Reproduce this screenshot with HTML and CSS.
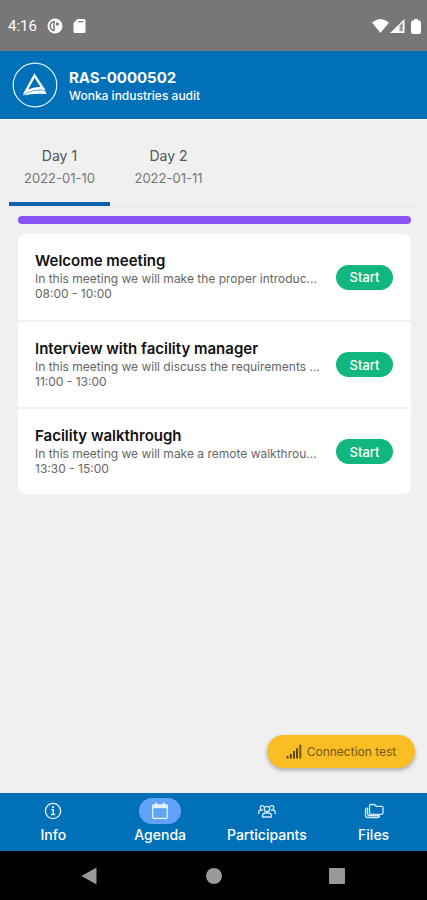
FILE: index.html
```html
<!DOCTYPE html>
<html lang="en">
<head>
<meta charset="utf-8">
<meta name="viewport" content="width=device-width, initial-scale=1">
<title>Agenda</title>
<link rel="stylesheet" href="styles.css">
</head>
<body>
<div class="status">
  <div class="status-group">
    <span class="clock">4:16</span>
    <svg width="16" height="16" viewBox="0 0 16 16"><circle cx="8" cy="8" r="7.5" fill="#fff"/><path d="M7 3.400A4.700 4.700 0 0 0 7 12.600Z" fill="none" stroke="#777" stroke-width="1.500"/><path d="M9 4.500h1.500a1.500 1.500 0 0 1 0 3H9Z" fill="#777"/></svg>
    <svg width="13" height="14" viewBox="0 0 13 14"><path d="M4.500 0H11a1.500 1.500 0 0 1 1.500 1.500V12.500A1.500 1.500 0 0 1 11 14H2A1.500 1.500 0 0 1 .5 12.500V4Z" fill="#fff"/><path d="M5 2.700h5.500" stroke="#777" stroke-width="1.200"/></svg>
  </div>
  <div class="status-group status-right">
    <svg width="17" height="14" viewBox="0 0 17 14"><path d="M0 3.500Q8.500-3.500 17 3.500L8.500 14Z" fill="#fff"/></svg>
    <svg width="15" height="14" viewBox="0 0 15 14"><path d="M0 14 14.500 0V14Z" fill="#fff"/><path d="M9.500 6.500 12.800 3.500V12.300H9.500Z" fill="#999"/></svg>
    <svg class="battery" width="10" height="15" viewBox="0 0 10 15"><path d="M3 0h4v1.500h1A2 2 0 0 1 10 3.500V13a2 2 0 0 1-2 2H2a2 2 0 0 1-2-2V3.500A2 2 0 0 1 2 1.500h1Z" fill="#fff"/></svg>
  </div>
</div>
<header class="header">
  <svg width="46" height="46" viewBox="0 0 46 46" fill="none"><circle cx="23" cy="23" r="21.800" stroke="#e4f1fb" stroke-width="1.200"/><path d="M22.500 13.500 13.500 30Q22.500 25.500 31 26.500Z" stroke="#fff" stroke-width="2.400"/><path d="M10.500 33.500Q20 27.500 33 28.500L34.500 32Q22 31 10.500 33.500Z" fill="#fff"/></svg>
  <div class="heading">
    <h1>RAS-0000502</h1>
    <p>Wonka industries audit</p>
  </div>
</header>
<main class="main">
  <div class="tabs">
    <button class="tab tab-active" type="button"><span class="day">Day 1</span><span class="date">2022-01-10</span></button>
    <button class="tab" type="button"><span class="day">Day 2</span><span class="date">2022-01-11</span></button>
  </div>
  <div class="track"></div>
  <ul class="card">
    <li class="item">
      <div class="item-text"><h2>Welcome meeting</h2><p>In this meeting we will make the proper introduc...</p><p>08:00 - 10:00</p></div>
      <button class="start" type="button">Start</button>
    </li>
    <li class="item">
      <div class="item-text"><h2>Interview with facility manager</h2><p>In this meeting we will discuss the requirements ...</p><p>11:00 - 13:00</p></div>
      <button class="start" type="button">Start</button>
    </li>
    <li class="item">
      <div class="item-text"><h2>Facility walkthrough</h2><p>In this meeting we will make a remote walkthrou...</p><p>13:30 - 15:00</p></div>
      <button class="start" type="button">Start</button>
    </li>
  </ul>
  <button class="test" type="button">
    <svg width="16" height="15" viewBox="0 0 16 15" fill="none" stroke="#5d4a12"><path d="M1.500 12v2.500M4.800 10v4.500M8 7v7.500" stroke-width="2"/><path d="M10.500 4.500h1V14h-1ZM13.800 1h1V14h-1Z" stroke-width="1"/></svg>
    Connection test
  </button>
</main>
<nav class="nav">
  <a href="#info"><span class="pill"><svg width="18" height="18" viewBox="0 0 18 18" fill="none" stroke="#e6f2ff"><circle cx="9" cy="9" r="7.600" stroke-width="1.400"/><path d="M7.300 7.700h2v4.500M7 12.500h4.200" stroke-width="1.400"/><circle cx="9" cy="5.200" r="1.100" fill="#e6f2ff" stroke="none"/></svg></span>Info</a>
  <a href="#agenda"><span class="pill pill-active"><svg width="18" height="18" viewBox="0 0 18 18" fill="none" stroke="#e6f2ff"><rect x="1.700" y="3" width="14.600" height="13.300" rx="1" stroke-width="1.300"/><path d="M2 4.700h14" stroke-width="3"/><path d="M5 .5V4M13 .5V4" stroke-width="1.500"/></svg></span>Agenda</a>
  <a href="#participants"><span class="pill"><svg width="18" height="18" viewBox="0 0 18 18" fill="none" stroke="#d5e8fa" stroke-width="1.300"><circle cx="9" cy="7" r="2.700"/><path d="M4.500 15v-1.500a3 3 0 0 1 3-2.500h3a3 3 0 0 1 3 2.500V15Z"/><path d="M6.200 5.400A2 2 0 1 0 3.200 7.300M11.800 5.400a2 2 0 1 1 3 1.900M5 8H3a2.300 2.300 0 0 0-2.200 2.300V12M13 8h2a2.300 2.300 0 0 1 2.200 2.300V12"/></svg></span>Participants</a>
  <a href="#files"><span class="pill"><svg width="20" height="18" viewBox="0 0 20 18" fill="none" stroke="#d5e8fa" stroke-width="1.300" stroke-linejoin="round"><path d="M5.500 4a1.500 1.500 0 0 1 1.500-1.500h3.500l1.800 1.800H17.500A1.500 1.500 0 0 1 19 5.800v5a1.500 1.500 0 0 1-1.500 1.500H7a1.500 1.500 0 0 1-1.500-1.500Z"/><path d="M3.500 6A2 2 0 0 0 1.500 8v5.500a2 2 0 0 0 2 2H13.500a2 2 0 0 0 2-2M3.500 6v5.500a2 2 0 0 0 2 2H15.500"/></svg></span>Files</a>
</nav>
<div class="system">
  <button type="button" aria-label="Back"><svg width="18" height="18" viewBox="0 0 18 18"><path d="M.5 9 15.500.5v17Z" fill="#999"/></svg></button>
  <button type="button" aria-label="Home"><svg width="18" height="18" viewBox="0 0 18 18"><circle cx="9" cy="9" r="8" fill="#999"/></svg></button>
  <button type="button" aria-label="Recent apps"><svg width="18" height="18" viewBox="0 0 18 18"><rect x="1" y="1" width="16" height="16" rx="1" fill="#999"/></svg></button>
</div>
</body>
</html>
```
FILE: styles.css
```css
* {
  box-sizing: border-box;
}

body {
  margin: 0;
  min-height: 100vh;
  display: flex;
  flex-direction: column;
  background: #f0f0f0;
  font-family: Inter, sans-serif;
}

h1, h2, p, ul {
  margin: 0;
  padding: 0;
}

button {
  border: 0;
  padding: 0;
  background: none;
  font-family: inherit;
}

svg {
  display: block;
  flex: none;
}

.status {
  display: flex;
  justify-content: space-between;
  align-items: center;
  padding: 1px 6px 0 8px;
  height: 51px;
  background: #777;
  color: #fff;
}

.status-group {
  display: flex;
  align-items: center;
  gap: 10px;
}

.status-right {
  gap: 1px;
}

.battery {
  margin-left: 5px;
}

.clock {
  font: 15px/20px Roboto, sans-serif;
}

.header {
  display: flex;
  align-items: center;
  gap: 11px;
  padding: 11px 12px;
  background: #0070b8;
  border-bottom: 1px solid #fff;
  color: #fff;
}

.heading {
  padding-top: 4px;
}

.heading h1 {
  font-size: 15px;
  line-height: 18px;
  font-weight: 700;
}

.heading p {
  font-size: 12px;
  line-height: 18px;
  font-weight: 500;
}

.main {
  flex: 1;
  display: flex;
  flex-direction: column;
  padding: 18px 7px 25px 9px;
}

.tabs {
  display: flex;
  gap: 8px;
  border-bottom: 1px solid #e8e8e8;
}

.tab {
  display: flex;
  flex-direction: column;
  align-items: center;
  gap: 2px;
  width: 101px;
  padding: 8px 0 14px;
  border-bottom: 4px solid transparent;
}

.tab-active {
  border-bottom-color: #0b63ad;
}

.day {
  font-size: 14px;
  line-height: 20px;
  color: #555;
}

.date {
  font-size: 13px;
  line-height: 20px;
  color: #777;
}

.track {
  height: 8px;
  margin: 9px 9px 10px;
  border-radius: 4px;
  background: #8754f3;
}

.card {
  margin: 0 9px;
  list-style: none;
  border-radius: 8px;
  background: #fff;
}

.item {
  display: flex;
  align-items: center;
  justify-content: space-between;
  gap: 5px;
  height: 86px;
  padding: 0 18px 0 17px;
}

.item + .item {
  height: 87px;
  border-top: 2px solid #f0f0f0;
}

.item-text {
  min-width: 0;
  padding-bottom: 2px;
  white-space: nowrap;
}

.item h2 {
  font-size: 15px;
  line-height: 20px;
  font-weight: 600;
  color: #111;
}

.item p {
  font-size: 12px;
  line-height: 15px;
  color: #666;
}

.start {
  flex: none;
  width: 57px;
  height: 25px;
  border-radius: 13px;
  background: #12b77f;
  color: #fff;
  font-size: 13px;
  line-height: 24px;
  font-weight: 500;
}

.test {
  display: flex;
  align-items: center;
  justify-content: center;
  gap: 5px;
  align-self: flex-end;
  width: 148px;
  height: 33px;
  margin: auto 5px 0 0;
  border-radius: 17px;
  background: #fabd23;
  box-shadow: 0 2px 4px rgba(0, 0, 0, 0.3);
  color: #755b17;
  font-size: 12px;
}

.nav {
  display: grid;
  grid-template-columns: repeat(4, 1fr);
  height: 58px;
  padding-top: 5px;
  background: #0070b8;
}

.nav a {
  display: flex;
  flex-direction: column;
  align-items: center;
  gap: 1px;
  color: #fff;
  font-size: 14px;
  line-height: 20px;
  font-weight: 500;
  text-decoration: none;
}

.pill {
  display: flex;
  align-items: center;
  justify-content: center;
  width: 42px;
  height: 26px;
  border-radius: 13px;
}

.pill-active {
  background: #60a2f8;
}

.system {
  display: flex;
  align-items: center;
  justify-content: space-between;
  height: 49px;
  padding: 0 81px;
  background: #000;
}
```
